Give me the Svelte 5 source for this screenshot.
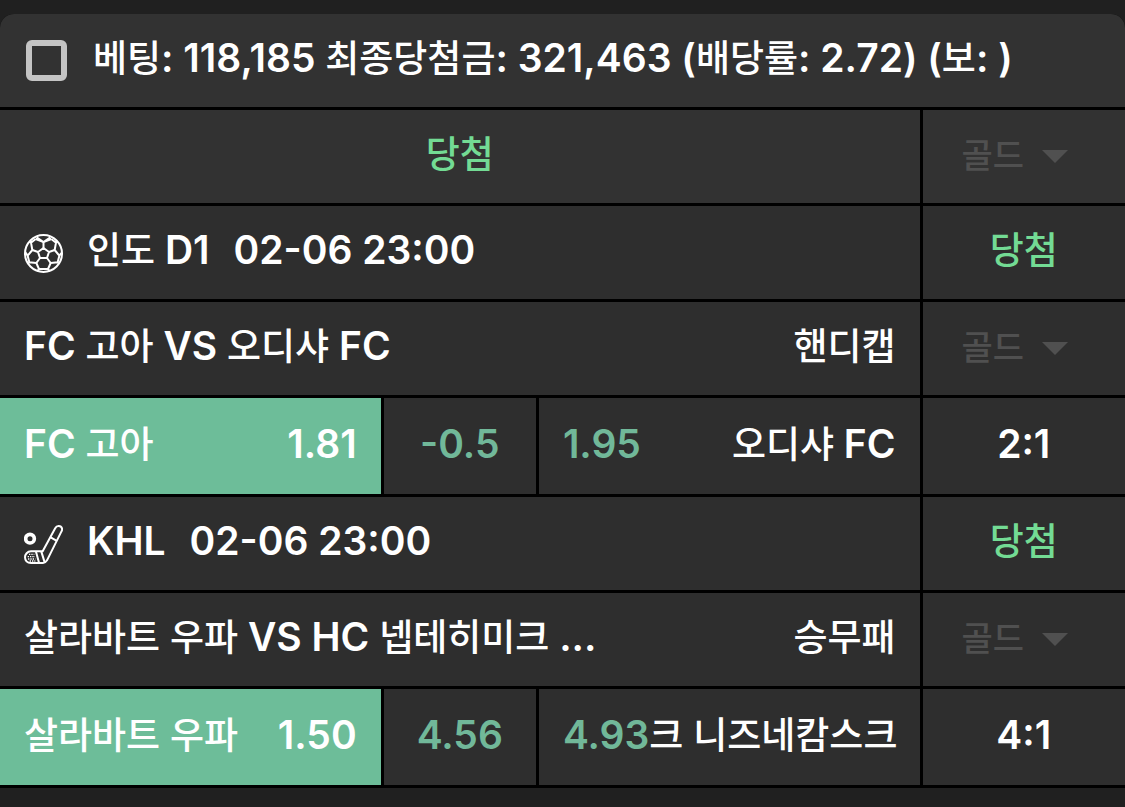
<script lang="ts">
	type Option = { name: string; odds: string; picked?: boolean };

	let slip = {
		summary: '베팅: 118,185 최종당첨금: 321,463 (배당률: 2.72) (보: )',
		result: '당첨'
	};

	let games = [
		{
			sport: 'soccer',
			league: '인도 D1',
			time: '02-06 23:00',
			result: '당첨',
			title: 'FC 고아 VS 오디샤 FC',
			market: '핸디캡',
			home: { name: 'FC 고아', odds: '1.81', picked: true } as Option,
			middle: '-0.5',
			away: { name: '오디샤 FC', odds: '1.95' } as Option,
			score: '2:1'
		},
		{
			sport: 'hockey',
			league: 'KHL',
			time: '02-06 23:00',
			result: '당첨',
			title: '살라바트 우파 VS HC 넵테히미크 ...',
			market: '승무패',
			home: { name: '살라바트 우파', odds: '1.50', picked: true } as Option,
			middle: '4.56',
			away: { name: '크 니즈네캄스크', odds: '4.93' } as Option,
			score: '4:1'
		}
	];

	let checked = $state(false);

	// hangul runs are set a little smaller than the latin ones
	function runs(text: string) {
		return text.split(/([가-힣]+)/).filter((part) => part !== '');
	}
</script>

{#snippet label(text: string)}<span>{#each runs(text) as part}{#if /[가-힣]/.test(part)}<span class="ko">{part}</span>{:else}{part}{/if}{/each}</span>{/snippet}

{#snippet gold(name: string)}
	<div class="cell side gold">
		<select aria-label={name} disabled>
			<option>골드</option>
		</select>
		<svg class="arrow" viewBox="0 0 26 13" aria-hidden="true"><path d="M0 0h26L13 13z" /></svg>
	</div>
{/snippet}

<main class="slip">
	<header class="cell head">
		<label>
			<input type="checkbox" bind:checked />
			{@render label(slip.summary)}
		</label>
	</header>

	<div class="row light">
		<div class="cell center win">{@render label(slip.result)}</div>
		{@render gold(slip.result)}
	</div>

	{#each games as game}
		<div class="row">
			<div class="cell league">
				{#if game.sport === 'soccer'}
					<svg class="icon" viewBox="0 0 117 117" aria-hidden="true">
						<circle cx="58.5" cy="58.5" r="55.5" />
						<path d="M58.5 42 75 54l-6 18H48l-6-18z" />
						<path d="M58.5 42V24M75 54l17-6M69 72l11 15M48 72 37 87M42 54l-17-6" />
						<path d="M38 10 58.5 24 79 10M58.5 24 35 15M58.5 24 82 15" />
						<path d="M82 15l14 11-4 22 14 17 8-10M106 65l-5 20-21 2-8 18 5 7M101 85l4 4M72 105H45M45 105l-8-18-21-2-5-20 14-17-4-22 14-11M11 65l-7-10M16 85l-4 4M45 105l-5 7M96 26l4-3M21 26l-4-3" />
					</svg>
				{:else}
					<svg class="icon" viewBox="0 0 117 117" aria-hidden="true">
						<circle class="puck" cx="18" cy="41" r="13" />
						<path d="M56 79 94 9C98 1 111 1 114 10c1 4 0 7-2 10L69 106c-3 5-6 8-12 8H21C9 114 3 106 3 97s7-18 18-18z" />
						<path d="M80 37l17 10M36 80l9 33M52 80l10 32" />
						<path class="dots" d="M15 88h16M11 95h22M12 102h22M17 108h17" />
					</svg>
				{/if}
				{@render label(game.league)}
				<time>{game.time}</time>
			</div>
			<div class="cell side center win">{@render label(game.result)}</div>
		</div>

		<div class="row">
			<div class="cell between">
				{@render label(game.title)}
				{@render label(game.market)}
			</div>
			{@render gold(game.title)}
		</div>

		<div class="row odds">
			<div class="picks">
				<div class="cell between" class:picked={game.home.picked}>
					{@render label(game.home.name)}
					<span>{game.home.odds}</span>
				</div>
				<div class="cell center rate">{game.middle}</div>
				<div class="cell between">
					<span class="rate">{game.away.odds}</span>
					{@render label(game.away.name)}
				</div>
			</div>
			<div class="cell side center">{game.score}</div>
		</div>
	{/each}
</main>

<style>
	:global(body) {
		background: #202020;
	}

	.slip {
		display: flex;
		flex-direction: column;
		gap: 3px;
		margin-top: 14px;
		padding-bottom: 3px;
		background: #000;
		border-radius: 14px 14px 0 0;
		color: #fff;
		font-family: Inter, "Noto Sans CJK KR", sans-serif;
		font-size: 39px;
		font-weight: 600;
		line-height: 48px;
		white-space: nowrap;
	}

	.ko {
		font-family: "Noto Sans CJK KR", sans-serif;
		font-size: 37px;
		font-weight: 500;
		line-height: 40px;
	}

	.row {
		display: grid;
		grid-template-columns: minmax(0, 1fr) 18%;
		gap: 3px;
	}

	.picks {
		display: grid;
		grid-template-columns: minmax(0, 5fr) minmax(0, 2fr) minmax(0, 5fr);
		gap: 3px;
	}

	.cell {
		display: flex;
		align-items: center;
		box-sizing: border-box;
		min-height: 93px;
		padding: 0 24px 6px;
		background: #2e2e2e;
	}

	.odds .cell {
		min-height: 96px;
		padding-bottom: 4px;
	}

	.head,
	.light .cell {
		background: #323232;
	}

	.head {
		border-radius: 14px 14px 0 0;
	}

	.head label {
		display: flex;
		align-items: center;
		gap: 26px;
	}

	.head input {
		appearance: none;
		flex: none;
		box-sizing: border-box;
		width: 41px;
		height: 41px;
		margin: 6px 0 0 2px;
		border: 6px solid #c4c4c4;
		border-radius: 6px;
	}

	.head input:checked {
		background: #6dbd99;
	}

	.center {
		justify-content: center;
	}

	.between {
		justify-content: space-between;
	}

	.cell.side {
		padding-left: 0;
		padding-right: 0;
	}

	.win {
		color: #73db94;
	}

	.rate {
		color: #71b899;
	}

	.cell.picked {
		background: #6dbd99;
	}

	.league {
		gap: 24px;
	}

	.icon {
		flex: none;
		width: 39px;
		height: 39px;
		margin-top: 8px;
		fill: none;
		stroke: #fff;
		stroke-width: 6;
		stroke-linejoin: round;
	}

	.icon .puck {
		stroke-width: 11;
	}

	.icon .dots {
		stroke-width: 4;
		stroke-dasharray: 4 3;
	}

	.cell.gold {
		position: relative;
		padding-left: 39px;
	}

	select {
		appearance: none;
		width: 110px;
		padding: 0;
		border: 0;
		background: none;
		color: #505050;
		opacity: 1;
		font: 500 34px/48px "Noto Sans CJK KR", sans-serif;
	}

	.arrow {
		position: absolute;
		left: 119px;
		top: 40px;
		width: 26px;
		height: 13px;
		fill: #505050;
		pointer-events: none;
	}
</style>
